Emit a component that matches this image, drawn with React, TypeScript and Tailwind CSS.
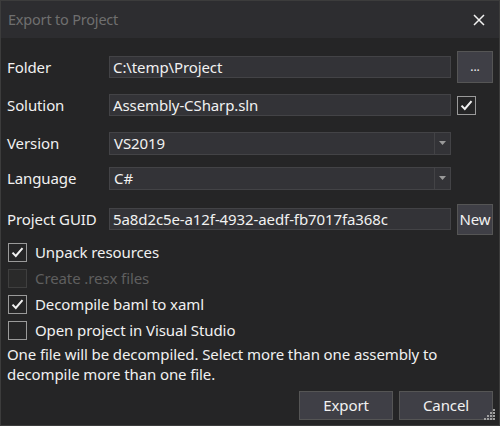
import React, { useState } from 'react';

const font = "font-['Noto_Sans',sans-serif]";

const Check: React.FC<{ checked: boolean; disabled?: boolean }> = ({ checked, disabled }) => (
  <span
    className={`flex h-[19px] w-[19px] shrink-0 items-center justify-center border ${
      disabled ? 'border-[#3f3f3f] bg-[#2a2a2a]' : 'border-[#9a9a9a] bg-[#252526]'
    }`}
  >
    {checked && (
      <svg width="13" height="11" viewBox="0 0 13 11">
        <path d="M1.5 5.6 L4.8 9 L11.5 1.2" fill="none" stroke="#f1f1f1" strokeWidth="2" />
      </svg>
    )}
  </span>
);

const Combo: React.FC<{ value: string }> = ({ value }) => (
  <div className="flex h-[23px] border border-[#434346] bg-[#333337]">
    <div className="flex flex-1 items-center px-[4px] text-[#f1f1f1]">{value}</div>
    <div className="flex w-[16px] items-center justify-center border-l border-[#434346]">
      <svg width="7" height="4" viewBox="0 0 7 4">
        <path d="M0 0 H7 L3.5 4 Z" fill="#9a9a9a" />
      </svg>
    </div>
  </div>
);

const Input: React.FC<{ value: string }> = ({ value }) => (
  <div className="flex h-[22px] items-center border border-[#434346] bg-[#333337] px-[3px] text-[#f1f1f1]">
    {value}
  </div>
);

const row = 'grid grid-cols-[96px_342px_36px] items-center gap-x-[6px]';

export default function App() {
  const [opts, setOpts] = useState({ unpack: true, resx: false, baml: true, open: false });

  const rows: { key: keyof typeof opts; label: string; disabled?: boolean }[] = [
    { key: 'unpack', label: 'Unpack resources' },
    { key: 'resx', label: 'Create .resx files', disabled: true },
    { key: 'baml', label: 'Decompile baml to xaml' },
    { key: 'open', label: 'Open project in Visual Studio' },
  ];

  return (
    <div className={`${font} relative flex h-[426px] w-[500px] flex-col border border-[#3c3c3c] bg-[#252526] text-[15px] tracking-[-0.1px] text-[#f1f1f1]`}>
      {/* Title bar */}
      <div className="flex h-[37px] shrink-0 items-center justify-between bg-[#2d2d30] pl-[7px] pr-[14px]">
        <span className="text-[14.5px] tracking-[-0.2px] text-[#6f6f6f]">Export to Project</span>
        <svg width="12" height="12" viewBox="0 0 12 12">
          <path d="M1 1 L11 11 M11 1 L1 11" stroke="#f1f1f1" strokeWidth="1.5" />
        </svg>
      </div>

      <div className="flex flex-col px-[6px] pt-[13px]">
        <div className={row}>
          <span>Folder</span>
          <Input value="C:\temp\Project" />
          <button className="flex h-[32px] items-end justify-center border border-[#555555] bg-[#3f3f46] pb-[9px] text-[12px] leading-none">
            ...
          </button>
        </div>

        <div className={`mt-[11px] ${row}`}>
          <span>Solution</span>
          <Input value="Assembly-CSharp.sln" />
          <Check checked />
        </div>

        <div className={`mt-[15px] ${row}`}>
          <span>Version</span>
          <Combo value="VS2019" />
        </div>

        <div className={`mt-[12px] ${row}`}>
          <span>Language</span>
          <Combo value="C#" />
        </div>

        <div className={`mt-[14px] ${row}`}>
          <span>Project GUID</span>
          <Input value="5a8d2c5e-a12f-4932-aedf-fb7017fa368c" />
          <button className="h-[31px] border border-[#555555] bg-[#3f3f46] text-[#f1f1f1]">New</button>
        </div>

        <div className="mt-[5px] flex flex-col">
          {rows.map(r => (
            <label
              key={r.key}
              className="flex h-[26px] items-center gap-[8px] pl-px"
              onClick={() => !r.disabled && setOpts(o => ({ ...o, [r.key]: !o[r.key] }))}
            >
              <Check checked={opts[r.key]} disabled={r.disabled} />
              <span className={r.disabled ? 'text-[#5f5f5f]' : ''}>{r.label}</span>
            </label>
          ))}
        </div>

        <p className="leading-[20px]">
          One file will be decompiled. Select more than one assembly to decompile more than one file.
        </p>

        <div className="mt-[7px] flex justify-end gap-[6px]">
          <button className="h-[29px] w-[94px] border border-[#555555] bg-[#3f3f46]">Export</button>
          <button className="h-[29px] w-[94px] border border-[#555555] bg-[#3f3f46]">Cancel</button>
        </div>
      </div>

      {/* resize grip */}
      <svg className="absolute bottom-[4px] right-[3px]" width="12" height="12" viewBox="0 0 12 12">
        {[
          [9, 0], [6, 3], [9, 3], [3, 6], [6, 6], [9, 6], [0, 9], [3, 9], [6, 9], [9, 9],
        ].map(([x, y]) => (
          <rect key={`${x}-${y}`} x={x} y={y} width="2" height="2" fill="#a0a0a0" />
        ))}
      </svg>
    </div>
  );
}
